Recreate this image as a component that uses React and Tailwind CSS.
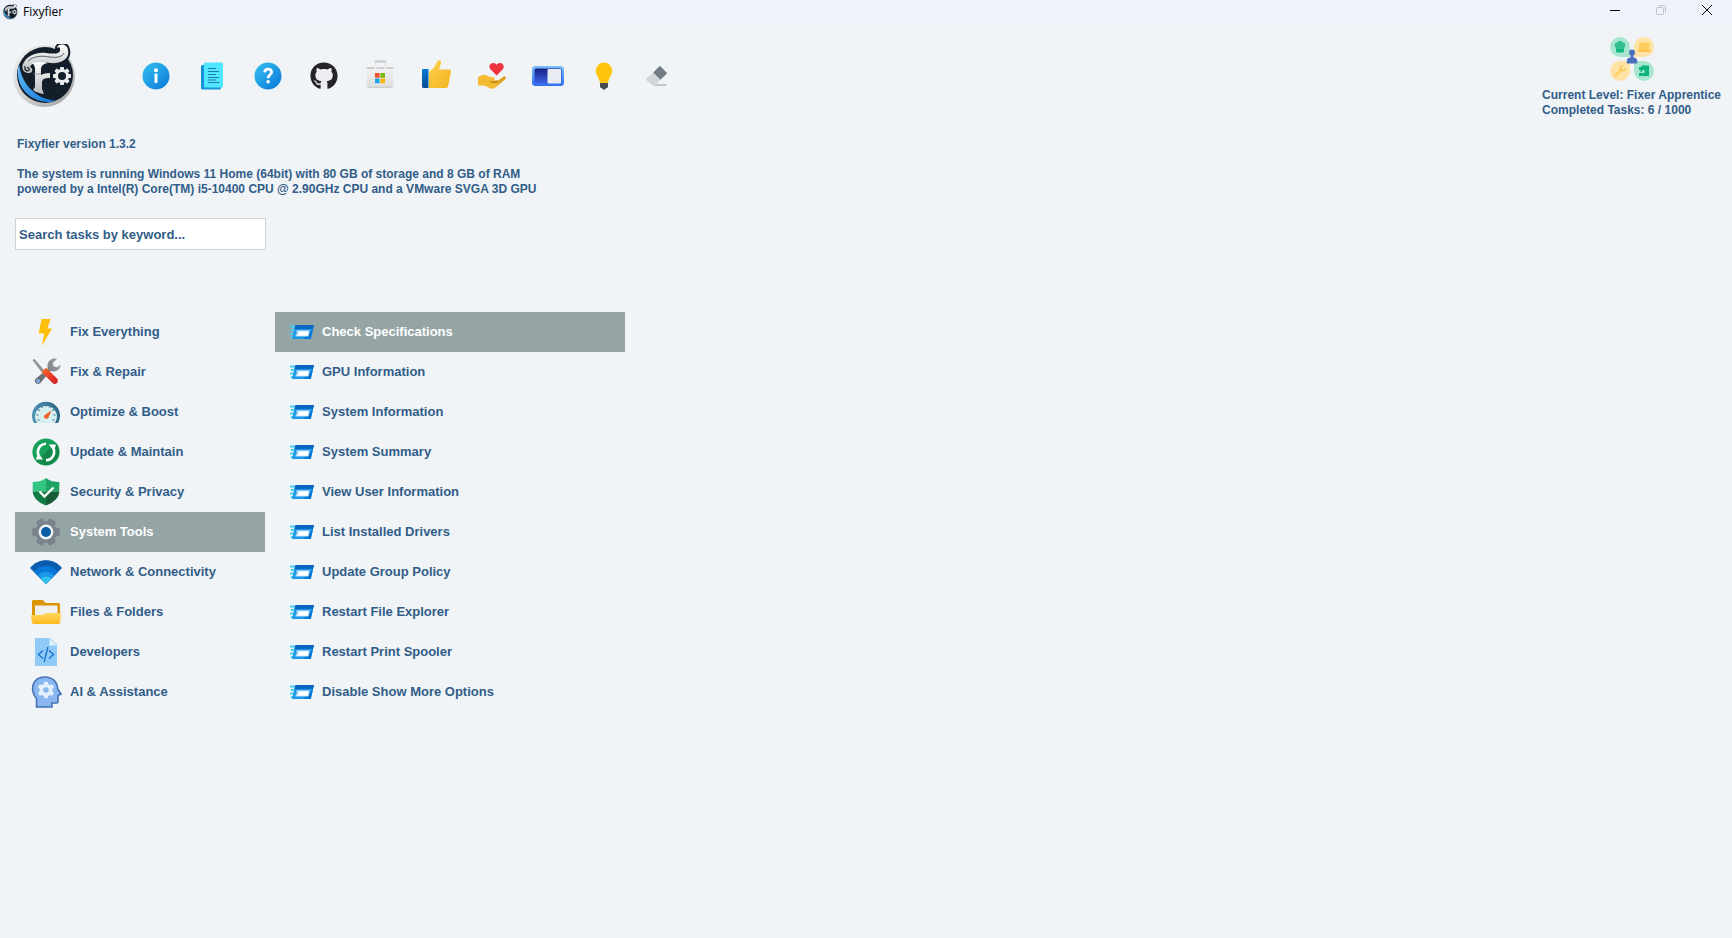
import { useState } from 'react'
import { FaGithub, FaWrench } from 'react-icons/fa'

// Toothed wheel shared by the logo, System Tools and AI icons
function Gear({ cx, cy, r, teeth = 8, width = 4, start = 0, fill }) {
  return (
    <g fill={fill}>
      <circle cx={cx} cy={cy} r={r * 0.78} />
      {Array.from({ length: teeth }, (_, i) => (
        <rect
          key={i}
          x={cx - width / 2}
          y={cy - r}
          width={width}
          height={r}
          rx={width / 5}
          transform={`rotate(${start + (360 / teeth) * i} ${cx} ${cy})`}
        />
      ))}
    </g>
  )
}

function Logo({ className }) {
  return (
    <svg viewBox="0 0 64 64" className={className} aria-hidden="true">
      <defs>
        <linearGradient id="ring" x1="0" y1="0" x2="1" y2="1">
          <stop offset="0" stopColor="#f4f4f4" />
          <stop offset="0.5" stopColor="#d2d2d2" />
          <stop offset="1" stopColor="#9b9b9b" />
        </linearGradient>
        <linearGradient id="crescent" x1="0" y1="0" x2="1" y2="1">
          <stop offset="0" stopColor="#62bdf8" />
          <stop offset="1" stopColor="#1173d6" />
        </linearGradient>
        <linearGradient id="silver" x1="0" y1="0" x2="0" y2="1">
          <stop offset="0" stopColor="#ffffff" />
          <stop offset="1" stopColor="#b9bbbd" />
        </linearGradient>
      </defs>
      <circle cx="32" cy="32" r="31" fill="url(#ring)" />
      <circle cx="33" cy="31" r="28" fill="#141e2b" />
      <path d="M7 20C2 36 12 57 36 58c4 0 6-.6 8-1.500C28 56 10 44 7 20z" fill="url(#crescent)" />
      {/* flourish across the top */}
      <path
        d="M18 29c-6 1-9-4-7-9 4-9 14-12 23-11 8 1 15 1 14-4 0-2-2-2-3-1 0-4 10-6 11 2 2 9-7 14-18 13-10-2-17-2-20 4 3 1 3 5 0 6z"
        fill="url(#silver)"
        stroke="#141e2b"
        strokeWidth="4"
        paintOrder="stroke"
      />
      <path d="M13 22c-1 4 2 6 4 4 1-2-1-3-2-2" fill="none" stroke="#141e2b" strokeWidth="1.200" />
      <path d="M16 17c7-6 15-5 22-4 7 1 12 0 14-4" fill="none" stroke="#59626d" strokeWidth="1" />
      <path
        d="M20 19q9-3 16 0-7 1-7 6v6q3-2 9-2v5q-9-1-8 6v5l2 5q-7-1-11-4l2-3V24q0-3-3-5z"
        fill="url(#silver)"
      />
      <path d="M22 30h7" stroke="#9ba0a5" strokeWidth="1" />
      <Gear cx={50} cy={32} r={9} width={4} fill="#e9ebed" />
      <circle cx="50" cy="32" r="4" fill="#141e2b" />
    </svg>
  )
}

function InfoIcon() {
  return (
    <>
      <defs>
        <linearGradient id="disc" x1="0" y1="0" x2="1" y2="1">
          <stop offset="0" stopColor="#36c0f0" />
          <stop offset="1" stopColor="#0a78d8" />
        </linearGradient>
      </defs>
      <circle cx="16" cy="16" r="13.500" fill="url(#disc)" />
      <circle cx="16" cy="10.200" r="2" fill="#fff" />
      <rect x="14.500" y="13.600" width="3" height="9.400" rx="1" fill="#fff" />
    </>
  )
}

function LogIcon() {
  return (
    <>
      <rect x="5" y="5" width="20" height="24.500" rx="1.500" fill="#1795dc" />
      <rect x="8" y="2.500" width="19" height="25" rx="1.500" fill="#50e6ff" />
      <path
        d="M12 8.500h8M12 11.500h11M12 14.500h8M12 17.500h11M12 20h8M12 22.500h11"
        stroke="#1b7fa9"
        strokeWidth="1.100"
      />
    </>
  )
}

function HelpIcon() {
  return (
    <>
      <circle cx="16" cy="16" r="13.500" fill="url(#disc)" />
      <path
        d="M12.600 12.400c.2-4.400 7-4.300 7-.4 0 2.700-3.500 2.900-3.500 6.200"
        fill="none"
        stroke="#fff"
        strokeWidth="2.800"
      />
      <circle cx="16.100" cy="21.700" r="1.800" fill="#fff" />
    </>
  )
}

function GithubIcon() {
  return (
    <>
      <circle cx="16" cy="16" r="12.500" fill="#eceef1" />
      <FaGithub x="2" y="2" size={28} color="#24232a" />
    </>
  )
}

function StoreIcon() {
  return (
    <>
      <defs>
        <linearGradient id="bag" x1="0" y1="0" x2="0" y2="1">
          <stop offset="0" stopColor="#f3f3f3" />
          <stop offset="1" stopColor="#dcdcdc" />
        </linearGradient>
      </defs>
      <path d="M11.500 9V1.500h10V9" fill="none" stroke="#e6e7e9" strokeWidth="1.500" />
      <path d="M11 1.500h11" stroke="#c6c8cb" strokeWidth="2" />
      <path d="M2.700 7h26.600v19.500a1.500 1.500 0 0 1-1.500 1.500H4.200a1.500 1.500 0 0 1-1.500-1.500z" fill="url(#bag)" />
      <path d="M2.700 8h8M12.500 8h8M22.500 8h6.800" stroke="#cdced1" strokeWidth="2" />
      <path d="M4 27.300h24" stroke="#c9cbce" strokeWidth="1" />
      <path d="M11 13h4.600v4.700H11z" fill="#f0512b" />
      <path d="M16.400 13H21v4.700h-4.600z" fill="#7db80c" />
      <path d="M11 18.500h4.600v4.700H11z" fill="#18a3ea" />
      <path d="M16.400 18.500H21v4.700h-4.600z" fill="#fcb60d" />
    </>
  )
}

function ThumbIcon() {
  return (
    <>
      <defs>
        <linearGradient id="thumb" x1="0" y1="0" x2="1" y2="1">
          <stop offset="0" stopColor="#ffd251" />
          <stop offset="1" stopColor="#f3b21c" />
        </linearGradient>
        <linearGradient id="cuff" x1="0" y1="0" x2="0" y2="1">
          <stop offset="0" stopColor="#0078d4" />
          <stop offset="1" stopColor="#0a4f91" />
        </linearGradient>
      </defs>
      <path
        d="M9 28V11.500c4.500-2 6.500-6.500 8.500-10.500 1.500-2 4.500-.2 3.500 2.500L19 9.500h10.500c1.200 0 1.700.8 1.500 2L28.200 26c-.3 1.300-1 2-2.200 2z"
        fill="url(#thumb)"
      />
      <path d="M2 10.500c0-1 .6-1.500 1.500-1.500h5v19h-5c-.9 0-1.500-.6-1.500-1.500z" fill="url(#cuff)" />
    </>
  )
}

function DonateIcon() {
  return (
    <>
      <path d="M20.600 15.500l-6.200-6.200c-3.500-4.500 3-8.800 6.200-4.600 3.200-4.200 9.700.1 6.200 4.600z" fill="#ee3340" />
      <path
        d="M2 17c4-3 8-2.500 11-.5 2.500 1 5.500.5 5.800 2 .2 1-.6 1.500-1.800 1.500l5 .5 5.500-3.700c1.500-.7 2.800.6 2 1.900l-9.700 8.500c-2.500 1.800-4 2-6.500.8L8.500 25.500H2z"
        fill="#f6bb35"
      />
      <path d="M13 20.500c3 1.500 6 1.500 9-.2l-1 2.200c-3 1.500-6 .5-8-2z" fill="#b97f14" />
      <path d="M22 21l5.500-4.200c1.500-.7 2.800.6 2 1.900L21 26z" fill="#dea222" />
    </>
  )
}

function ToggleIcon() {
  return (
    <>
      <defs>
        <linearGradient id="track" x1="0" y1="0" x2="0" y2="1">
          <stop offset="0" stopColor="#161f85" />
          <stop offset="1" stopColor="#3a63e6" />
        </linearGradient>
        <linearGradient id="frame" x1="0" y1="0" x2="0" y2="1">
          <stop offset="0" stopColor="#7cc0fb" />
          <stop offset="1" stopColor="#2e6ff0" />
        </linearGradient>
      </defs>
      <rect x="0" y="6" width="32" height="20" rx="3.500" fill="url(#frame)" />
      <rect x="2.500" y="8.500" width="27" height="15" rx="1.500" fill="url(#track)" />
      <rect x="15.500" y="9" width="13.500" height="14.500" rx="1" fill="#e9ebf3" />
    </>
  )
}

function BulbIcon() {
  return (
    <>
      <path
        d="M16 2.500a8.200 8.200 0 0 0-8.200 8.300c0 4.500 3.200 6.200 4.200 12.200h8c1-6 4.200-7.700 4.200-12.200A8.200 8.200 0 0 0 16 2.500z"
        fill="#ffc50f"
      />
      <path d="M12 23h8v3.200c0 1.500-1 1.800-2 1.800 0 1-.8 1.500-2 1.500s-2-.5-2-1.500c-1 0-2-.3-2-1.800z" fill="#484b4f" />
    </>
  )
}

function EraserIcon() {
  return (
    <>
      <path d="M11 25h11" stroke="#b5b8bb" strokeWidth="1.500" strokeLinecap="round" />
      <path d="M9.200 12.500l7.300 7.300-4.500 4.700c-1 1.200-2.700 1.500-3.900.5L2.800 20.800c-.8-1-.8-2 .2-3z" fill="#d3d5d8" />
      <path d="M9.200 12.500l6-6c.5-.5 1-.5 1.500 0L22.500 12.500c.5.5.5 1 0 1.500l-6 5.800z" fill="#737c85" />
    </>
  )
}

function BoltIcon() {
  return <path d="M11.500 3h9l-3 9.500H22L12 30l2-12.500H8.700z" fill="#ffbf0d" />
}

function ToolsIcon() {
  return (
    <>
      <defs>
        <linearGradient id="steel" x1="1" y1="0" x2="0" y2="1">
          <stop offset="0" stopColor="#9fa3a8" />
          <stop offset="1" stopColor="#5b6268" />
        </linearGradient>
        <linearGradient id="handle" x1="0" y1="0" x2="1" y2="1">
          <stop offset="0" stopColor="#fb7427" />
          <stop offset="0.6" stopColor="#e8352b" />
          <stop offset="1" stopColor="#cd1f28" />
        </linearGradient>
      </defs>
      <path
        d="M27 3c-4-1.500-9 1-9.500 6-.1 1.500 0 2.500.3 3.500L5.500 23c-1.500 2 0 4.800 2.500 5 1.200 0 2-.5 2.600-1.200L20.500 15c4.500 1.500 9.800-1 10.200-6.500l-3.500 2.800-3.500-.8-1-3.500z"
        fill="url(#steel)"
      />
      <circle cx="8" cy="25" r="2" fill="#7eb0ea" />
      <path d="M2.500 4l2-1L14 14l-2.500 2z" fill="#8d9398" />
      <path d="M11.500 16l4.500-4.200L27 22.500c1.800 2 .6 5.200-2 5.500-1 0-1.800-.4-2.500-1z" fill="url(#handle)" />
    </>
  )
}

function GaugeIcon() {
  return (
    <>
      <defs>
        <linearGradient id="rim" x1="0" y1="0" x2="1" y2="0">
          <stop offset="0" stopColor="#4f93b5" />
          <stop offset="1" stopColor="#2b6485" />
        </linearGradient>
      </defs>
      <path d="M4 27A14 14 0 1 1 28 27z" fill="url(#rim)" />
      <path d="M7 27A11 11 0 1 1 25 27z" fill="#d7efee" />
      <path
        d="M6.500 19h2M8 13.500l1.800 1M11.500 10l1 1.800M16 8.500v2M20.500 10l-1 1.800M24 13.500l-1.800 1M25.500 19h-2M7.500 24h2M24.500 24h-2"
        stroke="#34718f"
        strokeWidth="1.200"
      />
      <path d="M21.500 14.500l-3 7c-1 2-4 1.500-4.500-.5-.2-1 .3-1.800 1-2.300z" fill="#f2632b" />
    </>
  )
}

function UpdateIcon() {
  return (
    <>
      <circle cx="16" cy="16" r="13.600" fill="#17a05a" />
      <path d="M25.600 6.400A13.600 13.600 0 0 1 6.400 25.600z" fill="#118848" />
      <path
        d="M16 7.800A8.300 8.300 0 0 0 9.500 21M16 24.200A8.300 8.300 0 0 0 22.500 11"
        fill="none"
        stroke="#fff"
        strokeWidth="2.600"
      />
      <path d="M18.800 8.600l7.200-.2-2 6.600z" fill="#fff" />
      <path d="M13.200 23.400l-7.200.2 2-6.600z" fill="#fff" />
    </>
  )
}

function ShieldIcon() {
  return (
    <>
      <path d="M16 2c-4 3-8.500 4-13.300 4v9.500h13.300z" fill="#33c481" />
      <path d="M16 2c4 3 8.500 4 13.300 4v9.500H16z" fill="#21a366" />
      <path d="M2.700 15.500H16v14C8 26.500 3 21.500 2.700 15.500z" fill="#107c41" />
      <path d="M29.300 15.500H16v14c8-3 13-8 13.300-14z" fill="#185c37" />
      <path d="M9.500 15.500l5 5L23.500 11.500" fill="none" stroke="#fff" strokeWidth="2.400" />
    </>
  )
}

function SettingsIcon() {
  return (
    <>
      <Gear cx={16} cy={16} r={13.8} teeth={6} width={8} start={30} fill="#7a838c" />
      <circle cx="16" cy="16" r="7.400" fill="#f2f4f6" />
      <circle cx="16" cy="16" r="5" fill="#0b5aa6" />
    </>
  )
}

function WifiIcon() {
  return (
    <>
      <path d="M16 28L0 12c8-10.500 24-10.500 32 0z" fill="#0b5cad" />
      <path d="M16 28L4 16c6-8.500 18-8.500 24 0z" fill="#0a76d6" />
      <path d="M16 28L7.800 19.800c4-5.500 12.400-5.500 16.400 0z" fill="#1a97e6" />
      <path d="M16 28l-5-5c2.500-3.300 7.500-3.300 10 0z" fill="#35c0f2" />
    </>
  )
}

function FolderIcon() {
  return (
    <>
      <defs>
        <linearGradient id="front" x1="0" y1="0" x2="0" y2="1">
          <stop offset="0" stopColor="#ffd75e" />
          <stop offset="1" stopColor="#fcb91f" />
        </linearGradient>
      </defs>
      <path d="M2 5.500C2 4.600 2.600 4 3.500 4h9.300l3 3h12.700c.9 0 1.500.6 1.500 1.500V20H2z" fill="#dd9603" />
      <path d="M5 9.500h22.500V22H5z" fill="#f0f0f1" />
      <path d="M1 19h10c3 0 4-2 7-2h13l-.8 9c-.1 1.300-.8 2-2 2H4c-1.300 0-2-.7-2.200-2z" fill="url(#front)" />
    </>
  )
}

function CodeFileIcon() {
  return (
    <>
      <path d="M5 2h15l7 7v21H5z" fill="#90caf9" />
      <path d="M19.500 2.500V9.500h7z" fill="#e1f5fe" />
      <path d="M13 14.500L8.500 18.500l4.500 4M19 14.500l4.500 4-4.500 4M17.800 11l-3.600 15" fill="none" stroke="#1f77cf" strokeWidth="1.500" />
    </>
  )
}

function HeadIcon() {
  return (
    <>
      <path
        d="M6.500 31V22.500C-.5 14 2 1 15 1c8 0 12.500 5.500 12.700 12l3.300 5-3 1.500v6c0 1-.5 1.500-1.500 1.500H22v4z"
        fill="#8bb7f0"
        stroke="#4472b4"
        strokeWidth="1.600"
      />
      <Gear cx={16} cy={14} r={8.3} teeth={6} width={4} fill="#e4f1fd" />
      <circle cx="16" cy="14" r="2.800" fill="#8bb7f0" />
    </>
  )
}

function RunIcon() {
  return (
    <svg viewBox="0 0 24 14" className="h-[14px] w-6 shrink-0" aria-hidden="true">
      <path d="M0 1.500h6M1 5h5M0 8.500h5M1 12h4" stroke="#45cdf7" strokeWidth="1.800" />
      <path d="M5.500 0H24l-3.200 14H2z" fill="#1b9ae8" />
      <path d="M13 14L23 4l-2.200 10z" fill="#0a78d6" />
      <path d="M5.500 0H24l-1 4H4.500z" fill="#0b66bf" />
      <path d="M6.800 5.300h13l-1.500 6.200H5.300z" fill="#a5d6f7" />
      <path d="M7.800 6.200h11.400l-1.200 4.500H6.800z" fill="#fff" />
      <path d="M7.800 7l-1 2.500" stroke="#4a9fdf" strokeWidth="1" />
    </svg>
  )
}

const PETAL = 'M10 0a10 10 0 0 1 10 10v10H10a10 10 0 0 1 0-20z'

function LevelIcon() {
  return (
    <svg viewBox="0 0 44 44" className="mx-auto size-11" aria-hidden="true">
      <path d={PETAL} fill="#a9e6cf" />
      <path d={PETAL} fill="#ffe3a6" transform="translate(44 0) scale(-1 1)" />
      <path d={PETAL} fill="#ffe3a6" transform="translate(0 44) scale(1 -1)" />
      <path d={PETAL} fill="#a9e6cf" transform="translate(44 44) scale(-1 -1)" />
      <path d="M6.500 13L5 9.500C4 7 5.500 5 7.500 5.500 8 3.500 12 3.500 12.500 5.500c2-.5 3.500 1.500 2.500 4L13.500 13z" fill="#2fc08e" />
      <path d="M6.200 12h7.600v3.500H6.200z" fill="#0cb57d" />
      <path d="M29 5.500h10.500V13H29z" fill="#ffce62" />
      <path d="M28 12.500h12.500V15H28z" fill="#ffc34d" />
      <FaWrench x="4" y="28" size={12} color="#ffce62" />
      <path d="M29 30h2.500v-1.500H39V39H29v-3h5.500v-3H32v2h-1.500v-2H29z" fill="#0cb57d" />
      <circle cx="22" cy="15.500" r="3" fill="#4a70bd" />
      <path d="M20.500 17h3v3.500c2.500.3 3.700 1.500 3.700 3.200V26.500H16.800v-2.800c0-1.700 1.200-2.900 3.700-3.200z" fill="#4a70bd" />
    </svg>
  )
}

const TOOLBAR = [
  { label: 'About', Icon: InfoIcon },
  { label: 'Changelog', Icon: LogIcon },
  { label: 'Help', Icon: HelpIcon },
  { label: 'GitHub', Icon: GithubIcon },
  { label: 'Store', Icon: StoreIcon },
  { label: 'Rate', Icon: ThumbIcon },
  { label: 'Donate', Icon: DonateIcon },
  { label: 'Theme', Icon: ToggleIcon },
  { label: 'Suggest', Icon: BulbIcon },
  { label: 'Clean up', Icon: EraserIcon },
]

const CATEGORIES = [
  { name: 'Fix Everything', Icon: BoltIcon },
  { name: 'Fix & Repair', Icon: ToolsIcon },
  { name: 'Optimize & Boost', Icon: GaugeIcon },
  { name: 'Update & Maintain', Icon: UpdateIcon },
  { name: 'Security & Privacy', Icon: ShieldIcon },
  { name: 'System Tools', Icon: SettingsIcon },
  { name: 'Network & Connectivity', Icon: WifiIcon },
  { name: 'Files & Folders', Icon: FolderIcon },
  { name: 'Developers', Icon: CodeFileIcon },
  { name: 'AI & Assistance', Icon: HeadIcon },
]

const TASKS = [
  'Check Specifications',
  'GPU Information',
  'System Information',
  'System Summary',
  'View User Information',
  'List Installed Drivers',
  'Update Group Policy',
  'Restart File Explorer',
  'Restart Print Spooler',
  'Disable Show More Options',
]

function TitleBar() {
  return (
    <header className="flex h-[23px] items-center justify-between bg-[#eef2fb]">
      <div className="flex items-center gap-[5px] pl-[2px]">
        <Logo className="size-4" />
        <span className="font-['Open_Sans',sans-serif] text-xs text-black">Fixyfier</span>
      </div>
      <div className="flex h-full items-start pt-1 pr-[2px]">
        <button aria-label="Minimize" className="flex w-[46px] justify-center">
          <svg viewBox="0 0 12 12" className="size-3" fill="none" stroke="#000">
            <path d="M1 6.500h10" />
          </svg>
        </button>
        <button aria-label="Restore" className="flex w-[46px] justify-center" disabled>
          <svg viewBox="0 0 12 12" className="size-3" fill="none" stroke="#c0c3ca">
            <rect x="1.500" y="3.500" width="7" height="7" rx="1" />
            <path d="M3.500 1.500h5a2 2 0 0 1 2 2v5" />
          </svg>
        </button>
        <button aria-label="Close" className="flex w-[46px] justify-center">
          <svg viewBox="0 0 12 12" className="size-3" fill="none" stroke="#000">
            <path d="M1 1l10 10M11 1L1 11" />
          </svg>
        </button>
      </div>
    </header>
  )
}

function rowClass(active) {
  return `flex h-10 w-full items-center gap-2 px-[15px] text-left text-[13px] font-bold ${
    active ? 'bg-[#95a5a6] text-white' : 'text-[#325d88]'
  }`
}

export default function App() {
  const [category, setCategory] = useState('System Tools')
  const [task, setTask] = useState('Check Specifications')
  const [query, setQuery] = useState('')

  const visible = TASKS.filter((t) => t.toLowerCase().includes(query.toLowerCase()))

  return (
    <div className="min-h-screen bg-[#f0f4f7] font-['Liberation_Sans',Arial,sans-serif] text-[#325d88]">
      <TitleBar />

      <div className="flex items-start justify-between pr-[11px] pl-3">
        <div className="flex items-center pt-[21px]">
          <Logo className="mr-[52px] size-16" />
          <nav className="flex">
            {TOOLBAR.map(({ label, Icon }) => (
              <button key={label} aria-label={label} title={label} className="flex w-14 justify-center">
                <svg viewBox="0 0 32 32" className="size-8" aria-hidden="true">
                  <Icon />
                </svg>
              </button>
            ))}
          </nav>
        </div>
        <div className="pt-[14px] text-xs/[15px] font-bold">
          <LevelIcon />
          <p className="mt-[7px]">Current Level: Fixer Apprentice</p>
          <p>Completed Tasks: 6 / 1000</p>
        </div>
      </div>

      <main className="px-[15px] pt-[19px]">
        <div className="px-[2px] text-xs/[15px] font-bold">
          <p>Fixyfier version 1.3.2</p>
          <p className="mt-[15px]">The system is running Windows 11 Home (64bit) with 80 GB of storage and 8 GB of RAM</p>
          <p>powered by a Intel(R) Core(TM) i5-10400 CPU @ 2.90GHz CPU and a VMware SVGA 3D GPU</p>
        </div>

        <input
          type="text"
          aria-label="Search tasks"
          value={query}
          onChange={(e) => setQuery(e.target.value)}
          placeholder="Search tasks by keyword..."
          className="mt-[21px] block h-8 w-[251px] border border-[#ced4da] bg-white px-[3px] text-[13px] font-bold placeholder:text-[#325d88] focus:outline-none"
        />

        <div className="mt-[62px] flex gap-[10px]">
          <nav className="w-[250px]">
            {CATEGORIES.map(({ name, Icon }) => (
              <button key={name} onClick={() => setCategory(name)} className={rowClass(name === category)}>
                <svg viewBox="0 0 32 32" className="size-8 shrink-0" aria-hidden="true">
                  <Icon />
                </svg>
                {name}
              </button>
            ))}
          </nav>
          <div className="w-[350px]">
            {visible.map((name) => (
              <button key={name} onClick={() => setTask(name)} className={rowClass(name === task)}>
                <RunIcon />
                {name}
              </button>
            ))}
          </div>
        </div>
      </main>
    </div>
  )
}
